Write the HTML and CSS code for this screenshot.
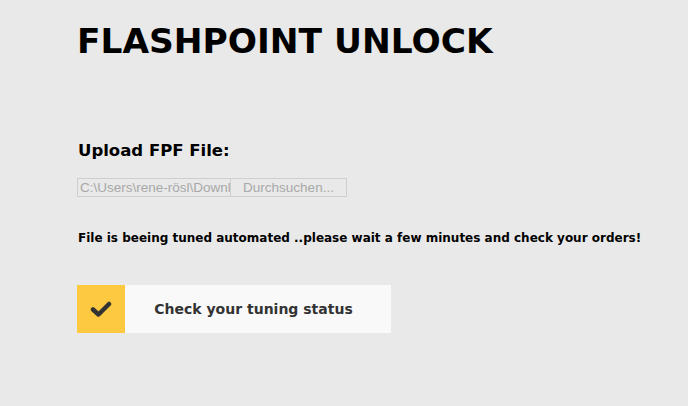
FILE: index.html
```html
<!DOCTYPE html>
<html>
<head>
<meta charset="utf-8">
<link rel="stylesheet" href="styles.css">
</head>
<body>
<main class="page">
  <h1 class="title">FLASHPOINT UNLOCK</h1>
  <h2 class="label">Upload FPF File:</h2>
  <div class="file">
    <span class="file-path">C:\Users\rene-rösl\Downl</span>
    <span class="file-btn">Durchsuchen...</span>
  </div>
  <p class="note">File is beeing tuned automated ..please wait a few minutes and check your orders!</p>
  <a class="status">
    <span class="status-icon">
      <svg width="22" height="18" viewBox="0 0 22 18"><path d="M3 9.5 L8.5 14.5 L19 4" fill="none" stroke="#333" stroke-width="4.5" stroke-linecap="round" stroke-linejoin="round"/></svg>
    </span>
    <span class="status-text">Check your tuning status</span>
  </a>
</main>
</body>
</html>
```
FILE: styles.css
```css
html, body {
  margin: 0;
  padding: 0;
  background: #e9e9e9;
}
body {
  font-family: "DejaVu Sans", sans-serif;
  width: 688px;
  height: 406px;
  overflow: hidden;
}
.page {
  padding: 19px 0 0 77px;
}
.title {
  margin: 0;
  font-size: 34.4px;
  line-height: 44px;
  font-weight: 700;
  color: #000;
  letter-spacing: 0;
}
.label {
  margin: 76px 0 0 1px;
  font-size: 16.5px;
  line-height: 24px;
  font-weight: 700;
  color: #000;
}
.file {
  display: flex;
  margin-top: 15px;
  width: 270px;
  height: 19px;
  font-family: "Liberation Sans", Arial, sans-serif;
  font-size: 13.5px;
  color: #a8a8a8;
}
.file-path {
  box-sizing: border-box;
  width: 153px;
  border: 1px solid #cfcfcf;
  border-right: none;
  padding: 0 1px 0 2px;
  line-height: 17px;
  white-space: nowrap;
}
.file-btn {
  box-sizing: border-box;
  width: 117px;
  border: 1px solid #cfcfcf;
  text-align: center;
  line-height: 17px;
}
.note {
  margin: 32px 0 0 1px;
  font-size: 12px;
  line-height: 18px;
  font-weight: 700;
  color: #000;
}
.status {
  display: flex;
  margin-top: 38px;
  width: 314px;
  height: 48px;
  background: #f9f9f9;
}
.status-icon {
  display: flex;
  align-items: center;
  justify-content: center;
  width: 48px;
  height: 48px;
  background: #fcc941;
}
.status-text {
  flex: 1;
  display: flex;
  align-items: center;
  justify-content: center;
  padding-right: 9px;
  font-size: 14px;
  font-weight: 700;
  color: #333;
}
```
